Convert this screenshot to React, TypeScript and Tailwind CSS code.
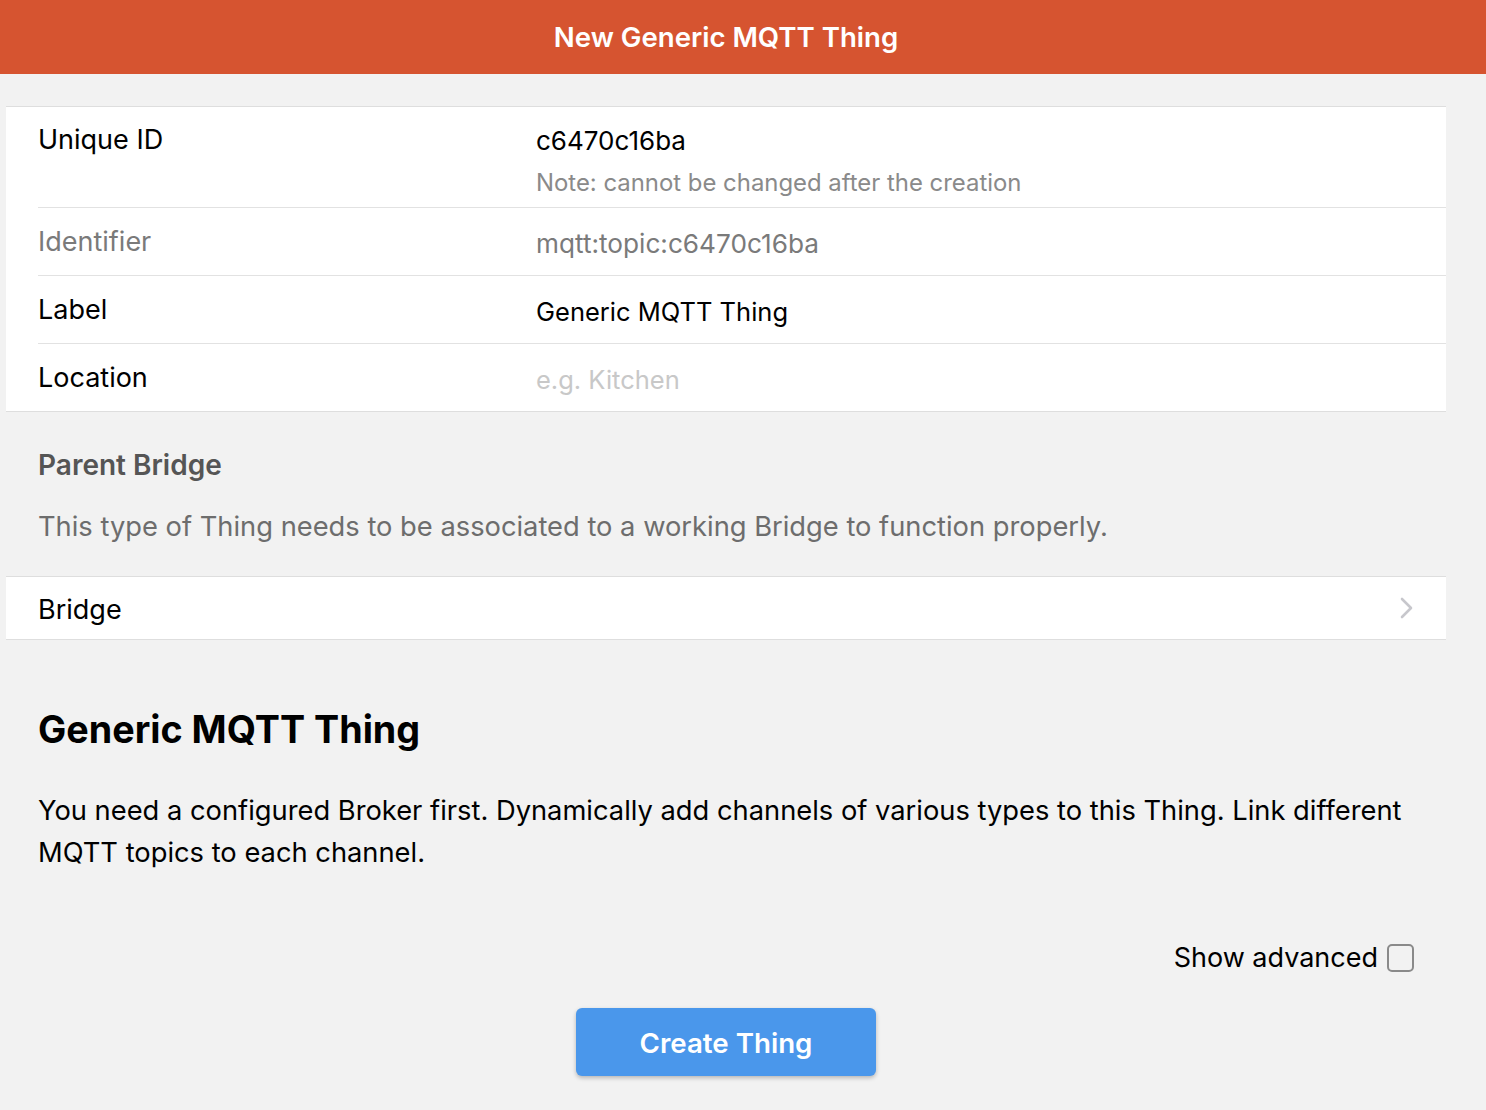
import React from "react";

export default function App() {
  const font = { fontFamily: "Inter, 'Noto Sans', sans-serif" };
  return (
    <div className="min-h-[1110px] bg-[#f2f2f2] text-black" style={font}>
      <div className="flex h-[74px] items-center justify-center bg-[#d65430] pr-[34px]">
        <span className="text-[27.6px] font-semibold leading-[34px] text-white">New Generic MQTT Thing</span>
      </div>

      <div className="ml-[6px] mr-[40px] mt-[32px] border-y border-[#dedede] bg-white">
        <div className="flex pl-[32px]">
          <div className="flex h-[101px] flex-1 border-b border-[#e2e2e2]">
            <div className="w-[498px] pt-[17px] text-[27px] leading-[32px]">Unique ID</div>
            <div className="flex flex-col pt-[18px]">
              <span className="text-[26px] leading-[32px]">c6470c16ba</span>
              <span className="mt-[11px] text-[23.9px] leading-[30px] text-[#8a8a8a]">Note: cannot be changed after the creation</span>
            </div>
          </div>
        </div>
        <div className="flex pl-[32px]">
          <div className="flex h-[68px] flex-1 items-center border-b border-[#e2e2e2]">
            <div className="w-[498px] text-[27px] leading-[32px] text-[#7a7a7a]">Identifier</div>
            <div className="pt-[4px] text-[26.2px] leading-[32px] text-[#7a7a7a]">mqtt:topic:c6470c16ba</div>
          </div>
        </div>
        <div className="flex pl-[32px]">
          <div className="flex h-[68px] flex-1 items-center border-b border-[#e2e2e2]">
            <div className="w-[498px] text-[27px] leading-[32px]">Label</div>
            <div className="pt-[4px] text-[25.5px] leading-[32px]">Generic MQTT Thing</div>
          </div>
        </div>
        <div className="flex pl-[32px]">
          <div className="flex h-[67px] flex-1 items-center">
            <div className="w-[498px] text-[27px] leading-[32px]">Location</div>
            <div className="pt-[4px] text-[25.5px] leading-[32px] text-[#c8c8c8]">e.g. Kitchen</div>
          </div>
        </div>
      </div>

      <div className="ml-[38px] mr-[72px] mt-[36px] text-[28px] font-semibold leading-[34px] text-[#555555]">Parent Bridge</div>
      <div className="ml-[38px] mr-[72px] mt-[28px] text-[27.3px] leading-[34px] text-[#6d6d6d]">
        This type of Thing needs to be associated to a working Bridge to function properly.
      </div>

      <div className="ml-[6px] mr-[40px] mt-[32px] flex h-[64px] items-center justify-between border-y border-[#dedede] bg-white pl-[32px] pr-[33px]">
        <span className="pt-[3px] text-[27px] leading-[32px]">Bridge</span>
        <svg width="13" height="22" viewBox="0 0 13 22" fill="none">
          <path d="M2 2 L11 11 L2 20" stroke="#c7c7cc" strokeWidth="2.6" strokeLinecap="round" strokeLinejoin="round" />
        </svg>
      </div>

      <div className="ml-[38px] mr-[72px] mt-[65px] text-[37.7px] font-bold leading-[48px]">Generic MQTT Thing</div>
      <div className="ml-[38px] mr-[72px] mt-[37px] text-[27.3px] leading-[42px]">
        You need a configured Broker first. Dynamically add channels of various types to this Thing. Link different MQTT topics to each channel.
      </div>

      <div className="ml-[38px] mr-[72px] mt-[67px] flex items-center justify-end gap-[9px]">
        <span className="text-[27px] leading-[34px]">Show advanced</span>
        <span className="block h-[28px] w-[27px] rounded-[5px] border-2 border-[#8a8a8a]"></span>
      </div>

      <div className="mt-[33px] flex justify-center pr-[34px]">
        <button className="h-[68px] w-[300px] rounded-[6px] bg-[#4a97eb] pt-[3px] text-[27.7px] font-semibold text-white shadow-[0_2px_4px_rgba(0,0,0,0.25)]">
          Create Thing
        </button>
      </div>
    </div>
  );
}
